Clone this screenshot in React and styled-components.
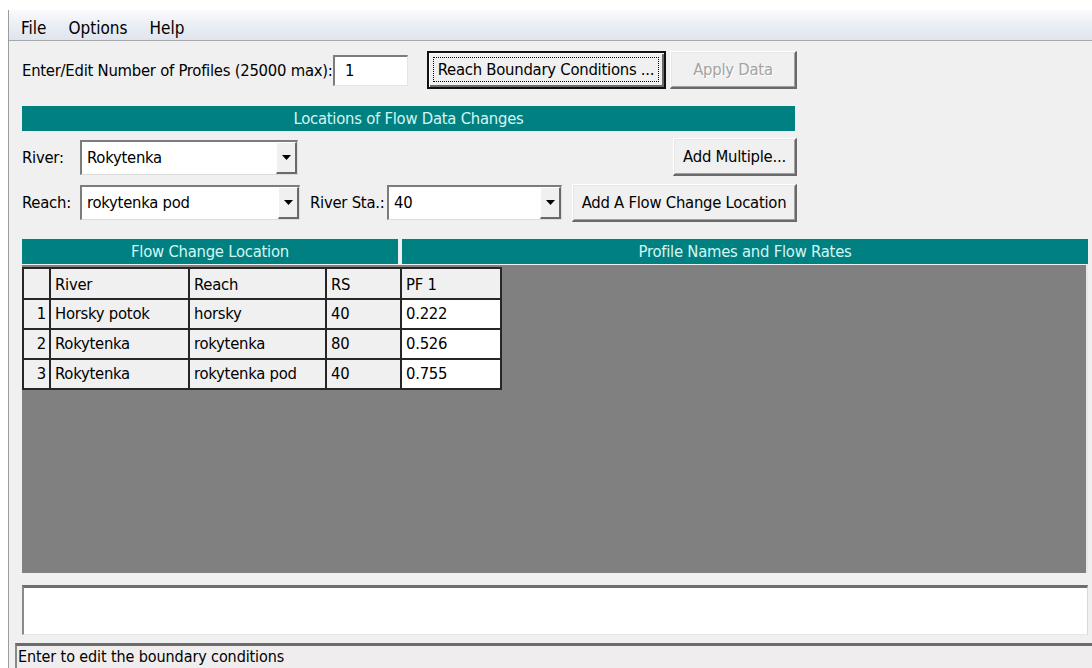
import styled, { createGlobalStyle } from "styled-components";

const GlobalStyle = createGlobalStyle`
  html, body {
    margin: 0;
    padding: 0;
    background: #ffffff;
  }
  body {
    font-family: "DejaVu Sans Condensed", "DejaVu Sans", "Liberation Sans", sans-serif;
    font-stretch: condensed;
    font-size: 16.5px;
    letter-spacing: -0.25px;
    color: #000;
  }
  #root {
    height: 668px;
    overflow: hidden;
  }
`;

const teal = "#008080";

const Window = styled.div`
  margin: 10px 0 0 8px;
  height: 658px;
  border-left: 1px solid #9c9c9c;
  background: #f0f0f0;
  display: flex;
  flex-direction: column;
`;

const MenuBar = styled.div`
  box-sizing: border-box;
  height: 33px;
  display: flex;
  align-items: center;
  gap: 22px;
  padding: 5px 0 0 12px;
  background: linear-gradient(#fbfbfd 0%, #eceff6 45%, #dfe4ee 100%);
  border-bottom: 1px solid #a8a8a8;
  font-size: 17px;
  letter-spacing: 0;
`;

const MenuItem = styled.span`
  cursor: default;
`;

const Content = styled.div`
  display: flex;
  flex-direction: column;
  padding: 10px 4px 0 13px;
`;

const Row = styled.div`
  display: flex;
  align-items: center;
  height: ${(p) => p.$height || 38}px;
  margin-top: ${(p) => p.$top || 0}px;
  width: ${(p) => (p.$width ? `${p.$width}px` : "auto")};
`;

const Label = styled.span`
  width: ${(p) => (p.$width ? `${p.$width}px` : "auto")};
  flex-shrink: 0;
  white-space: nowrap;
  padding-left: ${(p) => p.$pad || 0}px;
  box-sizing: border-box;
`;

const Spacer = styled.div`
  flex: 1;
`;

const TextBox = styled.div`
  box-sizing: border-box;
  width: ${(p) => p.$width}px;
  height: 31px;
  background: #fff;
  border-top: 2px solid #7c7c7c;
  border-left: 2px solid #7c7c7c;
  border-right: 1px solid #e4e4e4;
  border-bottom: 1px solid #e4e4e4;
  padding-left: 10px;
  line-height: 27px;
`;

const Button = styled.div`
  box-sizing: border-box;
  width: ${(p) => p.$width}px;
  height: 38px;
  margin-left: ${(p) => p.$left || 0}px;
  flex-shrink: 0;
  display: flex;
  align-items: center;
  justify-content: center;
  background: #f0f0f0;
  white-space: nowrap;
  border-style: solid;
  border-width: ${(p) => (p.$focused ? "2px" : "1px 2px 2px 1px")};
  border-color: ${(p) =>
    p.$focused ? "#111" : "#ffffff #6a6a6a #6a6a6a #ffffff"};
  box-shadow: ${(p) =>
    p.$focused
      ? "inset 1px 1px #fff, inset -2px -2px #6a6a6a"
      : "inset 1px 1px #e6e6e6, inset -1px -1px #a0a0a0"};
  color: ${(p) => (p.$disabled ? "#a3a3a3" : "#000")};
  text-shadow: ${(p) => (p.$disabled ? "1px 1px 0 #ffffff" : "none")};
`;

const FocusRing = styled.span`
  align-self: stretch;
  flex: 1;
  margin: 4px 5px 5px 4px;
  display: flex;
  align-items: center;
  justify-content: center;
  border: 1px dotted #000;
`;

const Banner = styled.div`
  box-sizing: border-box;
  height: 26px;
  width: ${(p) => (p.$width ? `${p.$width}px` : "auto")};
  flex: ${(p) => (p.$width ? "0 0 auto" : 1)};
  margin-top: ${(p) => p.$top || 0}px;
  background: ${teal};
  color: #d4f6f4;
  text-align: center;
  line-height: 25px;
  border-top: 1px solid #e4f4f2;
`;

const BannerRow = styled.div`
  display: flex;
  gap: 4px;
  margin-top: 16px;
`;

const Combo = styled.div`
  box-sizing: border-box;
  width: ${(p) => p.$width}px;
  height: 35px;
  flex-shrink: 0;
  display: flex;
  align-items: stretch;
  background: #fff;
  border-top: 2px solid #7c7c7c;
  border-left: 2px solid #7c7c7c;
  border-right: 1px solid #dcdcdc;
  border-bottom: 1px solid #dcdcdc;
`;

const ComboText = styled.span`
  flex: 1;
  padding-left: 5px;
  line-height: 31px;
  white-space: nowrap;
`;

const ComboArrow = styled.div`
  box-sizing: border-box;
  width: 21px;
  display: flex;
  align-items: center;
  justify-content: center;
  background: #f0f0f0;
  border-style: solid;
  border-width: 1px 2px 2px 1px;
  border-color: #ffffff #6a6a6a #6a6a6a #ffffff;
`;

const GridArea = styled.div`
  height: 306px;
  margin-top: 1px;
  background: #808080;
  padding-top: 2px;
  border-right: 2px solid #e8e8e8;
`;

const Table = styled.table`
  border-collapse: collapse;
  table-layout: fixed;
  border: 2px solid #1c1c1c;
`;

const Cell = styled.td`
  box-sizing: border-box;
  height: ${(p) => (p.$head ? 31 : 30)}px;
  width: ${(p) => p.$width}px;
  padding: ${(p) => (p.$num ? "0 3px 0 0" : "0 0 0 4px")};
  border: 2px solid #262626;
  background: ${(p) => (p.$value && !p.$head ? "#ffffff" : "#f0f0f0")};
  text-align: ${(p) => (p.$num ? "right" : "left")};
  vertical-align: middle;
  white-space: nowrap;
  line-height: 22px;
  padding-top: ${(p) => (p.$head ? 3 : 0)}px;
`;

const Memo = styled.div`
  height: 50px;
  margin-top: 12px;
  box-sizing: border-box;
  background: #fff;
  border-top: 3px solid #6e6e6e;
  border-left: 2px solid #8a8a8a;
  border-right: 1px solid #d8d8d8;
  border-bottom: 1px solid #e6e6e6;
`;

const StatusBar = styled.div`
  flex: 1;
  margin: 8px 0 0 6px;
  box-sizing: border-box;
  background: #efeded;
  border-top: 3px solid #6b6b6b;
  border-left: 2px solid #8a8a8a;
  padding-left: 1px;
  font-size: 16px;
  letter-spacing: -0.1px;
  line-height: 22px;
  white-space: nowrap;
`;

const Arrow = () => (
  <svg width="9" height="5" viewBox="0 0 9 5">
    <path d="M0 0H9L4.5 5Z" fill="#000" />
  </svg>
);

const DropDown = ({ width, value }) => (
  <Combo $width={width}>
    <ComboText>{value}</ComboText>
    <ComboArrow>
      <Arrow />
    </ComboArrow>
  </Combo>
);

const columns = [
  { key: "n", width: 27 },
  { key: "river", width: 139, title: "River" },
  { key: "reach", width: 137, title: "Reach" },
  { key: "rs", width: 75, title: "RS" },
  { key: "pf", width: 100, title: "PF 1", value: true },
];

const rows = [
  { n: 1, river: "Horsky potok", reach: "horsky", rs: "40", pf: "0.222" },
  { n: 2, river: "Rokytenka", reach: "rokytenka", rs: "80", pf: "0.526" },
  { n: 3, river: "Rokytenka", reach: "rokytenka pod", rs: "40", pf: "0.755" },
];

export default function App() {
  return (
    <>
      <GlobalStyle />
      <Window>
        <MenuBar>
          <MenuItem>File</MenuItem>
          <MenuItem>Options</MenuItem>
          <MenuItem>Help</MenuItem>
        </MenuBar>

        <Content>
          <Row $height={38}>
            <Label $width={311}>Enter/Edit Number of Profiles (25000 max):</Label>
            <TextBox $width={75}>1</TextBox>
            <Button $width={239} $left={19} $focused>
              <FocusRing>Reach Boundary Conditions ...</FocusRing>
            </Button>
            <Button $width={127} $left={4} $disabled>
              Apply Data
            </Button>
          </Row>

          <Banner $width={773} $top={16}>
            Locations of Flow Data Changes
          </Banner>

          <Row $top={7} $width={775}>
            <Label $width={58}>River:</Label>
            <DropDown width={218} value="Rokytenka" />
            <Spacer />
            <Button $width={124}>Add Multiple...</Button>
          </Row>

          <Row $top={7} $height={39}>
            <Label $width={58}>Reach:</Label>
            <DropDown width={220} value="rokytenka pod" />
            <Label $width={87} $pad={10}>River Sta.:</Label>
            <DropDown width={175} value="40" />
            <Button $width={225} $left={10}>
              Add A Flow Change Location
            </Button>
          </Row>

          <BannerRow>
            <Banner $width={376}>Flow Change Location</Banner>
            <Banner>Profile Names and Flow Rates</Banner>
          </BannerRow>

          <GridArea>
            <Table>
              <tbody>
                <tr>
                  {columns.map((c) => (
                    <Cell key={c.key} $head $width={c.width} $value={c.value}>
                      {c.title || ""}
                    </Cell>
                  ))}
                </tr>
                {rows.map((r) => (
                  <tr key={r.n}>
                    {columns.map((c) => (
                      <Cell
                        key={c.key}
                        $width={c.width}
                        $num={c.key === "n"}
                        $value={c.value}
                      >
                        {r[c.key]}
                      </Cell>
                    ))}
                  </tr>
                ))}
              </tbody>
            </Table>
          </GridArea>

          <Memo />
        </Content>

        <StatusBar>Enter to edit the boundary conditions</StatusBar>
      </Window>
    </>
  );
}
